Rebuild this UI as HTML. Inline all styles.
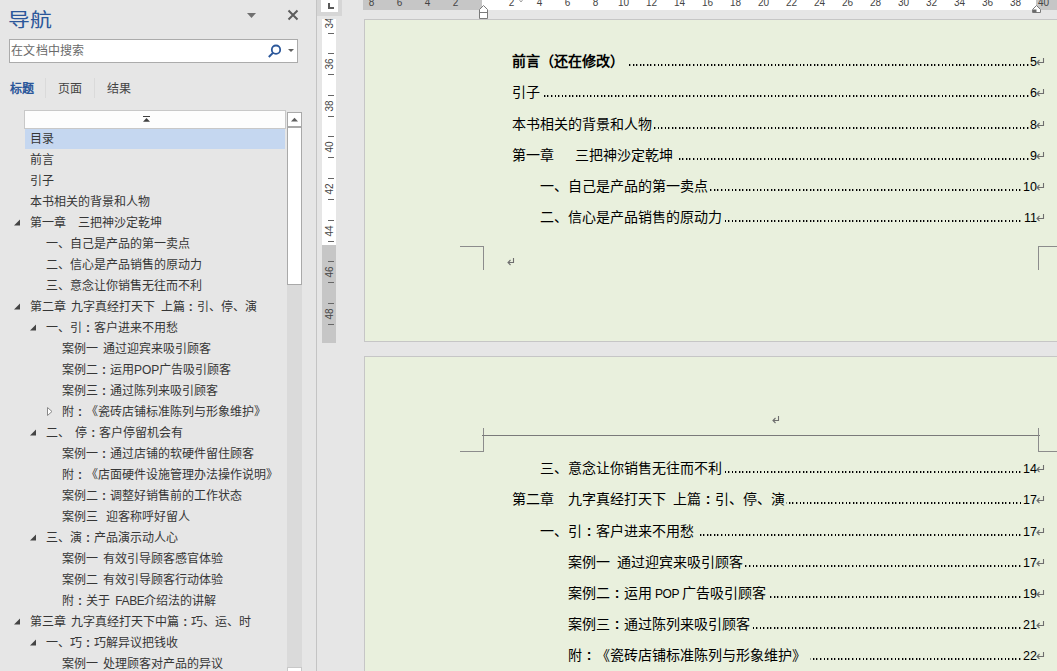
<!DOCTYPE html>
<html lang="zh-CN"><head><meta charset="utf-8">
<style>
*{margin:0;padding:0;box-sizing:border-box}
html,body{width:1057px;height:671px;overflow:hidden;background:#e6e6e6;font-family:"Liberation Sans",sans-serif;position:relative;text-spacing-trim:space-all}
.a{position:absolute}
#title{position:absolute;left:8px;top:8px;font-size:21px;line-height:28px;color:#2b579a;transform:scale(1.04,0.92);transform-origin:0 0}
#search{position:absolute;left:9px;top:39px;width:289px;height:24px;background:#fff;border:1px solid #ababab}
#search span{position:absolute;left:1px;top:2px;font-size:12px;line-height:18px;color:#6a6a6a;letter-spacing:0.3px}
.tab{position:absolute;top:79.8px;font-size:12px;line-height:18px;color:#444}
.sep{position:absolute;top:78px;width:1px;height:20px;background:#dadada}
#treetop{position:absolute;left:24px;top:110px;width:262px;height:19px;background:#fdfdfd;border:1px solid #c8c8c8}
.nt{position:absolute;font-size:12px;line-height:21px;color:#363636;white-space:nowrap;word-spacing:2px}
#sb{position:absolute;left:287px;top:112px;width:15px;height:559px;background:#dadada}
#sbup{position:absolute;left:287px;top:112px;width:15px;height:15px;background:#fff;border:1px solid #a9a9a9}
#sbthumb{position:absolute;left:287px;top:127px;width:15px;height:158px;background:#fff;border:1px solid #a9a9a9}
#sbdn{position:absolute;left:287px;top:667px;width:15px;height:15px;background:#fff;border:1px solid #c8c8c8}
#vline{position:absolute;left:316px;top:0;width:1px;height:671px;background:#c4c4c4}
.page{position:absolute;left:364px;width:720px;background:#e9f0dd;border:1px solid #c6c6c6}
.tl{position:absolute;height:30px;display:flex;align-items:baseline;font-size:14px;line-height:30px;color:#000;white-space:nowrap}
.tt{flex:none;background:#e9f0dd}
.dl{flex:1}
.pn{flex:none;font-size:12.5px;background:#e9f0dd;padding-left:1.5px}
.dots{position:absolute;height:2px;background-image:repeating-linear-gradient(to right,#000 0,#000 1px,rgba(0,0,0,.35) 1px,rgba(0,0,0,.35) 1.8px,transparent 1.8px,transparent 3.55px)}
.pil{position:absolute;right:-9px;top:11px}
.hn{position:absolute;top:-3.5px;width:20px;text-align:center;font-size:10px;line-height:12px;color:#444}
.vn{position:absolute;left:319.5px;width:20px;height:20px;text-align:center;font-size:10px;line-height:20px;color:#444;transform:rotate(-90deg)}
.crop{position:absolute;background:#8c8c8c}
.c{display:inline-block;width:1em;text-align:center;font-weight:bold;font-family:"Liberation Sans",sans-serif}
</style></head><body>
<div id="title">导航</div>
<svg class="a" style="left:246px;top:12px" width="12" height="8"><path d="M1 1 L10 1 L5.5 6 Z" fill="#707070"/></svg>
<svg class="a" style="left:287px;top:9px" width="12" height="12"><path d="M1.5 1.5 L10.5 10.5 M10.5 1.5 L1.5 10.5" stroke="#5c5c5c" stroke-width="2"/></svg>
<div id="search"><span>在文档中搜索</span>
<svg class="a" style="left:256px;top:3px" width="16" height="16"><circle cx="10" cy="6.7" r="4.2" fill="none" stroke="#2b579a" stroke-width="1.8"/><path d="M7.2 9.6 L2.8 14" stroke="#2b579a" stroke-width="2"/></svg>
<svg class="a" style="left:278px;top:9px" width="6" height="4"><path d="M0 0 L6 0 L3 3 Z" fill="#606060"/></svg>
</div>
<div class="tab" style="left:10px;color:#2b579a;font-weight:bold">标题</div>
<div class="sep" style="left:45px"></div>
<div class="tab" style="left:58px">页面</div>
<div class="sep" style="left:94px"></div>
<div class="tab" style="left:107px">结果</div>
<div id="treetop"><svg class="a" style="left:118px;top:5px" width="8" height="7"><path d="M0 0.5 L7 0.5" stroke="#404040" stroke-width="1"/><path d="M0 5.8 L7 5.8 L3.5 2 Z" fill="#404040"/></svg></div>
<div class="a" style="left:25px;top:129px;width:260px;height:20px;background:#c5d7f0"></div>
<div class="nt" style="left:30px;top:129px">目录</div>
<div class="nt" style="left:30px;top:150px">前言</div>
<div class="nt" style="left:30px;top:171px">引子</div>
<div class="nt" style="left:30px;top:192px">本书相关的背景和人物</div>
<div class="nt" style="left:30px;top:213px">第一章　三把神沙定乾坤</div><svg class="a" style="left:14px;top:219px" width="8" height="8"><path d="M6 0.5 L6 6.5 L0 6.5 Z" fill="#444"/></svg>
<div class="nt" style="left:46px;top:234px">一、自己是产品的第一卖点</div>
<div class="nt" style="left:46px;top:255px">二、信心是产品销售的原动力</div>
<div class="nt" style="left:46px;top:276px">三、意念让你销售无往而不利</div>
<div class="nt" style="left:30px;top:297px">第二章 九字真经打天下 上篇<span class="c">:</span>引、停、演</div><svg class="a" style="left:14px;top:303px" width="8" height="8"><path d="M6 0.5 L6 6.5 L0 6.5 Z" fill="#444"/></svg>
<div class="nt" style="left:46px;top:318px">一、引<span class="c">:</span>客户进来不用愁</div><svg class="a" style="left:30px;top:324px" width="8" height="8"><path d="M6 0.5 L6 6.5 L0 6.5 Z" fill="#444"/></svg>
<div class="nt" style="left:62px;top:339px">案例一 通过迎宾来吸引顾客</div>
<div class="nt" style="left:62px;top:360px">案例二<span class="c">:</span>运用POP广告吸引顾客</div>
<div class="nt" style="left:62px;top:381px">案例三<span class="c">:</span>通过陈列来吸引顾客</div>
<div class="nt" style="left:62px;top:402px">附<span class="c">:</span>《瓷砖店铺标准陈列与形象维护》</div><svg class="a" style="left:47px;top:407px" width="8" height="12"><path d="M0.5 0.5 L5 4.5 L0.5 8.5 Z" fill="#fff" stroke="#888" stroke-width="1"/></svg>
<div class="nt" style="left:46px;top:423px">二、 停<span class="c">:</span>客户停留机会有</div><svg class="a" style="left:30px;top:429px" width="8" height="8"><path d="M6 0.5 L6 6.5 L0 6.5 Z" fill="#444"/></svg>
<div class="nt" style="left:62px;top:444px">案例一<span class="c">:</span>通过店铺的软硬件留住顾客</div>
<div class="nt" style="left:62px;top:465px">附<span class="c">:</span>《店面硬件设施管理办法操作说明》</div>
<div class="nt" style="left:62px;top:486px">案例二<span class="c">:</span>调整好销售前的工作状态</div>
<div class="nt" style="left:62px;top:507px">案例三<span style="display:inline-block;width:8px"></span>迎客称呼好留人</div>
<div class="nt" style="left:46px;top:528px">三、演<span class="c">:</span>产品演示动人心</div><svg class="a" style="left:30px;top:534px" width="8" height="8"><path d="M6 0.5 L6 6.5 L0 6.5 Z" fill="#444"/></svg>
<div class="nt" style="left:62px;top:549px">案例一 有效引导顾客感官体验</div>
<div class="nt" style="left:62px;top:570px">案例二 有效引导顾客行动体验</div>
<div class="nt" style="left:62px;top:591px">附<span class="c">:</span>关于 <span style="letter-spacing:-0.4px">FABE</span>介绍法的讲解</div>
<div class="nt" style="left:30px;top:612px">第三章 九字真经打天下中篇<span class="c">:</span>巧、运、时</div><svg class="a" style="left:14px;top:618px" width="8" height="8"><path d="M6 0.5 L6 6.5 L0 6.5 Z" fill="#444"/></svg>
<div class="nt" style="left:46px;top:633px">一、巧<span class="c">:</span>巧解异议把钱收</div><svg class="a" style="left:30px;top:639px" width="8" height="8"><path d="M6 0.5 L6 6.5 L0 6.5 Z" fill="#444"/></svg>
<div class="nt" style="left:62px;top:654px">案例一 处理顾客对产品的异议</div>
<div id="sb"></div><div id="sbthumb"></div><div id="sbup"><svg class="a" style="left:2.5px;top:4px" width="8" height="5"><path d="M0 4.5 L7 4.5 L3.5 0.8 Z" fill="#606060"/></svg></div><div id="sbdn"></div>
<div id="vline"></div>
<div class="a" style="left:317px;top:0;width:25px;height:16px;background:#d6d6d6"></div>
<div class="a" style="left:321px;top:0;width:17px;height:12px;background:#fff"></div>
<div class="a" style="left:328px;top:3px;width:2px;height:6px;background:#595959"></div><div class="a" style="left:328px;top:7px;width:6px;height:2px;background:#595959"></div>
<div class="a" style="left:363px;top:0;width:694px;height:10px;background:#c6c6c6"></div>
<div class="a" style="left:482px;top:0;width:554px;height:10px;background:#fff"></div>
<span class="hn" style="left:361.5px">8</span><span class="hn" style="left:389.5px">6</span><span class="hn" style="left:417.5px">4</span><span class="hn" style="left:445.5px">2</span><span class="hn" style="left:501.5px">2</span><span class="hn" style="left:529.5px">4</span><span class="hn" style="left:557.5px">6</span><span class="hn" style="left:585.5px">8</span><span class="hn" style="left:613.5px">10</span><span class="hn" style="left:641.5px">12</span><span class="hn" style="left:669.5px">14</span><span class="hn" style="left:697.5px">16</span><span class="hn" style="left:725.5px">18</span><span class="hn" style="left:753.5px">20</span><span class="hn" style="left:781.5px">22</span><span class="hn" style="left:809.5px">24</span><span class="hn" style="left:837.5px">26</span><span class="hn" style="left:865.5px">28</span><span class="hn" style="left:893.5px">30</span><span class="hn" style="left:921.5px">32</span><span class="hn" style="left:949.5px">34</span><span class="hn" style="left:977.5px">36</span><span class="hn" style="left:1005.5px">38</span><span class="hn" style="left:1033.5px">40</span>
<svg class="a" style="left:479px;top:5px" width="10" height="15"><path d="M0.5 13.5 L0.5 4.5 L4.5 0.5 L8.5 4.5 L8.5 13.5 Z M0.5 7.5 L8.5 7.5" fill="#fff" stroke="#7a7a7a" stroke-width="1"/></svg>
<svg class="a" style="left:519px;top:0px" width="4" height="3"><path d="M0.5 0 L2 2 L3.5 0" fill="none" stroke="#888" stroke-width="0.8"/></svg>
<svg class="a" style="left:1032px;top:5px" width="10" height="9"><path d="M0.5 7.5 L0.5 4.5 L4.5 0.5 L8.5 4.5 L8.5 7.5 Z" fill="#fff" stroke="#7a7a7a" stroke-width="1"/><rect x="1" y="4.5" width="3.5" height="3" fill="#6a6a6a"/></svg>
<div class="a" style="left:322px;top:19px;width:14px;height:324px;background:#c6c6c6;overflow:hidden">
<div class="a" style="left:0;top:0;width:14px;height:226px;background:#fff"></div>
<div class="a" style="left:-322px;top:-19px;width:400px;height:400px"><span class="vn" style="top:12.5px">34</span><div class="a" style="left:328px;top:11.6px;width:6px;height:1px;background:#666"></div><div class="a" style="left:328px;top:32.6px;width:6px;height:1px;background:#666"></div><span class="vn" style="top:54.1px">36</span><div class="a" style="left:328px;top:53.2px;width:6px;height:1px;background:#666"></div><div class="a" style="left:328px;top:74.2px;width:6px;height:1px;background:#666"></div><span class="vn" style="top:95.7px">38</span><div class="a" style="left:328px;top:94.8px;width:6px;height:1px;background:#666"></div><div class="a" style="left:328px;top:115.8px;width:6px;height:1px;background:#666"></div><span class="vn" style="top:137.3px">40</span><div class="a" style="left:328px;top:136.4px;width:6px;height:1px;background:#666"></div><div class="a" style="left:328px;top:157.4px;width:6px;height:1px;background:#666"></div><span class="vn" style="top:178.9px">42</span><div class="a" style="left:328px;top:178.0px;width:6px;height:1px;background:#666"></div><div class="a" style="left:328px;top:199.0px;width:6px;height:1px;background:#666"></div><span class="vn" style="top:220.5px">44</span><div class="a" style="left:328px;top:219.6px;width:6px;height:1px;background:#666"></div><div class="a" style="left:328px;top:240.6px;width:6px;height:1px;background:#666"></div><span class="vn" style="top:262.1px">46</span><div class="a" style="left:328px;top:261.2px;width:6px;height:1px;background:#666"></div><div class="a" style="left:328px;top:282.2px;width:6px;height:1px;background:#666"></div><span class="vn" style="top:303.7px">48</span><div class="a" style="left:328px;top:302.8px;width:6px;height:1px;background:#666"></div><div class="a" style="left:328px;top:323.8px;width:6px;height:1px;background:#666"></div></div></div>
<div class="page" style="top:19px;height:323px"></div>
<div class="page" style="top:356px;height:400px"></div>
<div class="crop" style="left:460px;top:246px;width:24px;height:1px"></div>
<div class="crop" style="left:483px;top:246px;width:1px;height:24px"></div>
<div class="crop" style="left:1038px;top:246px;width:19px;height:1px"></div>
<div class="crop" style="left:1038px;top:246px;width:1px;height:24px"></div>
<svg class="a" style="left:507px;top:257px" width="9" height="10"><path d="M6.5 1 L6.5 5.5 L1 5.5 M3.5 3 L1 5.5 L3.5 8" fill="none" stroke="#6e6e6e" stroke-width="1.1"/></svg>
<div class="crop" style="left:483px;top:428px;width:1px;height:24px"></div>
<div class="crop" style="left:460px;top:451px;width:24px;height:1px"></div>
<div class="crop" style="left:482px;top:435px;width:558px;height:1px;background:#7a7a7a"></div>
<div class="crop" style="left:1038px;top:428px;width:1px;height:24px"></div>
<div class="crop" style="left:1038px;top:451px;width:19px;height:1px"></div>
<svg class="a" style="left:772px;top:415px" width="9" height="10"><path d="M6.5 1 L6.5 5.5 L1 5.5 M3.5 3 L1 5.5 L3.5 8" fill="none" stroke="#6e6e6e" stroke-width="1.1"/></svg>
<div class="dots" style="left:512px;top:64px;width:525px"></div>
<div class="tl" style="left:512px;top:46.2px;width:525px"><span class="tt" style="padding-right:4px"><b>前言（还在修改）</b></span><span class="dl"></span><span class="pn">5</span></div><svg class="a" style="left:1036px;top:57px" width="10" height="10"><path d="M7.5 1 L7.5 5.5 L1 5.5 M3.5 3 L1 5.5 L3.5 8" fill="none" stroke="#6e6e6e" stroke-width="1.1"/></svg>
<div class="dots" style="left:512px;top:95px;width:525px"></div>
<div class="tl" style="left:512px;top:77.2px;width:525px"><span class="tt" style="padding-right:4px">引子</span><span class="dl"></span><span class="pn">6</span></div><svg class="a" style="left:1036px;top:88px" width="10" height="10"><path d="M7.5 1 L7.5 5.5 L1 5.5 M3.5 3 L1 5.5 L3.5 8" fill="none" stroke="#6e6e6e" stroke-width="1.1"/></svg>
<div class="dots" style="left:512px;top:127px;width:525px"></div>
<div class="tl" style="left:512px;top:109.4px;width:525px"><span class="tt" style="padding-right:2px">本书相关的背景和人物</span><span class="dl"></span><span class="pn">8</span></div><svg class="a" style="left:1036px;top:120px" width="10" height="10"><path d="M7.5 1 L7.5 5.5 L1 5.5 M3.5 3 L1 5.5 L3.5 8" fill="none" stroke="#6e6e6e" stroke-width="1.1"/></svg>
<div class="dots" style="left:512px;top:158px;width:525px"></div>
<div class="tl" style="left:512px;top:140.3px;width:525px"><span class="tt" style="padding-right:4px">第一章<span style="display:inline-block;width:21px"></span>三把神沙定乾坤</span><span class="dl"></span><span class="pn">9</span></div><svg class="a" style="left:1036px;top:151px" width="10" height="10"><path d="M7.5 1 L7.5 5.5 L1 5.5 M3.5 3 L1 5.5 L3.5 8" fill="none" stroke="#6e6e6e" stroke-width="1.1"/></svg>
<div class="dots" style="left:540px;top:189px;width:497px"></div>
<div class="tl" style="left:540px;top:171.2px;width:497px"><span class="tt" style="padding-right:1px">一、自己是产品的第一卖点</span><span class="dl"></span><span class="pn">10</span></div><svg class="a" style="left:1036px;top:182px" width="10" height="10"><path d="M7.5 1 L7.5 5.5 L1 5.5 M3.5 3 L1 5.5 L3.5 8" fill="none" stroke="#6e6e6e" stroke-width="1.1"/></svg>
<div class="dots" style="left:540px;top:220px;width:497px"></div>
<div class="tl" style="left:540px;top:201.9px;width:497px"><span class="tt" style="padding-right:1px">二、信心是产品销售的原动力</span><span class="dl"></span><span class="pn">11</span></div><svg class="a" style="left:1036px;top:213px" width="10" height="10"><path d="M7.5 1 L7.5 5.5 L1 5.5 M3.5 3 L1 5.5 L3.5 8" fill="none" stroke="#6e6e6e" stroke-width="1.1"/></svg>
<div class="dots" style="left:540px;top:471px;width:497px"></div>
<div class="tl" style="left:540px;top:453.1px;width:497px"><span class="tt" style="padding-right:1px">三、意念让你销售无往而不利</span><span class="dl"></span><span class="pn">14</span></div><svg class="a" style="left:1036px;top:464px" width="10" height="10"><path d="M7.5 1 L7.5 5.5 L1 5.5 M3.5 3 L1 5.5 L3.5 8" fill="none" stroke="#6e6e6e" stroke-width="1.1"/></svg>
<div class="dots" style="left:512px;top:502px;width:525px"></div>
<div class="tl" style="left:512px;top:484.2px;width:525px"><span class="tt" style="padding-right:1px">第二章<span style="display:inline-block;width:14px"></span>九字真经打天下<span style="display:inline-block;width:7px"></span>上篇<span class="c">:</span>引、停、演</span><span class="dl"></span><span class="pn">17</span></div><svg class="a" style="left:1036px;top:495px" width="10" height="10"><path d="M7.5 1 L7.5 5.5 L1 5.5 M3.5 3 L1 5.5 L3.5 8" fill="none" stroke="#6e6e6e" stroke-width="1.1"/></svg>
<div class="dots" style="left:540px;top:534px;width:497px"></div>
<div class="tl" style="left:540px;top:516.0px;width:497px"><span class="tt" style="padding-right:4px">一、引<span class="c">:</span>客户进来不用愁</span><span class="dl"></span><span class="pn">17</span></div><svg class="a" style="left:1036px;top:527px" width="10" height="10"><path d="M7.5 1 L7.5 5.5 L1 5.5 M3.5 3 L1 5.5 L3.5 8" fill="none" stroke="#6e6e6e" stroke-width="1.1"/></svg>
<div class="dots" style="left:568px;top:565px;width:469px"></div>
<div class="tl" style="left:568px;top:547.0px;width:469px"><span class="tt" style="padding-right:1px">案例一<span style="display:inline-block;width:7px"></span>通过迎宾来吸引顾客</span><span class="dl"></span><span class="pn">17</span></div><svg class="a" style="left:1036px;top:558px" width="10" height="10"><path d="M7.5 1 L7.5 5.5 L1 5.5 M3.5 3 L1 5.5 L3.5 8" fill="none" stroke="#6e6e6e" stroke-width="1.1"/></svg>
<div class="dots" style="left:568px;top:596px;width:469px"></div>
<div class="tl" style="left:568px;top:578.0px;width:469px"><span class="tt" style="padding-right:4px">案例二<span class="c">:</span>运用<span style="font-size:12px;letter-spacing:-0.4px"> POP </span>广告吸引顾客</span><span class="dl"></span><span class="pn">19</span></div><svg class="a" style="left:1036px;top:589px" width="10" height="10"><path d="M7.5 1 L7.5 5.5 L1 5.5 M3.5 3 L1 5.5 L3.5 8" fill="none" stroke="#6e6e6e" stroke-width="1.1"/></svg>
<div class="dots" style="left:568px;top:627px;width:469px"></div>
<div class="tl" style="left:568px;top:609.0px;width:469px"><span class="tt" style="padding-right:1px">案例三<span class="c">:</span>通过陈列来吸引顾客</span><span class="dl"></span><span class="pn">21</span></div><svg class="a" style="left:1036px;top:620px" width="10" height="10"><path d="M7.5 1 L7.5 5.5 L1 5.5 M3.5 3 L1 5.5 L3.5 8" fill="none" stroke="#6e6e6e" stroke-width="1.1"/></svg>
<div class="dots" style="left:568px;top:658px;width:469px"></div>
<div class="tl" style="left:568px;top:640.0px;width:469px"><span class="tt" style="padding-right:4px">附<span class="c">:</span>《瓷砖店铺标准陈列与形象维护》</span><span class="dl"></span><span class="pn">22</span></div><svg class="a" style="left:1036px;top:651px" width="10" height="10"><path d="M7.5 1 L7.5 5.5 L1 5.5 M3.5 3 L1 5.5 L3.5 8" fill="none" stroke="#6e6e6e" stroke-width="1.1"/></svg>
</body></html>
